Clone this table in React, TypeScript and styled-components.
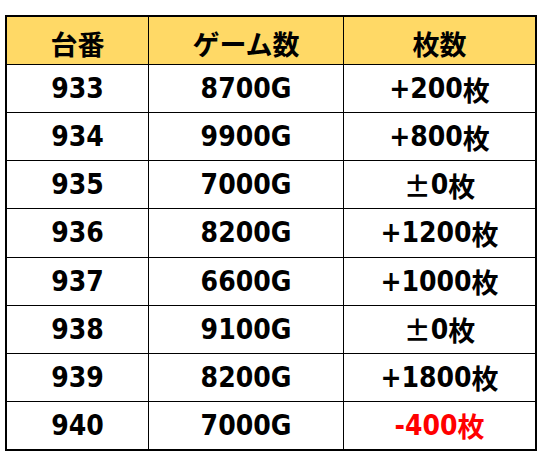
import React from "react";
import styled, { createGlobalStyle } from "styled-components";

const Global = createGlobalStyle`
  html, body { margin: 0; padding: 0; background: #fff; }
  body { font-family: "Noto Sans CJK JP", "Noto Sans", sans-serif; }
`;

const Page = styled.div`
  padding: 15px 0 0 5px;
`;

const Grid = styled.div`
  box-sizing: border-box;
  width: 532px;
  height: 436px;
  background: #000;
  padding: 2px;
  display: grid;
  grid-template-columns: 141px 194px 191px;
  grid-template-rows: 47px repeat(8, 1fr);
  gap: 1px;
`;

const Cell = styled.div<{ $head?: boolean; $red?: boolean }>`
  background: ${(p) => (p.$head ? "#FFD966" : "#fff")};
  color: ${(p) => (p.$red ? "#FF0000" : "#000")};
  display: flex;
  align-items: center;
  justify-content: center;
  font-family: "DejaVu Sans Condensed", "DejaVu Sans", "Noto Sans CJK JP", sans-serif;
  font-stretch: condensed;
  font-weight: 700;
  font-size: 28px;
  line-height: 1;
  padding-top: ${(p) => (p.$head ? "6px" : "1px")};
  box-sizing: border-box;
`;

const Kanji = styled.span`
  font-family: "Noto Sans CJK JP", sans-serif;
  font-stretch: normal;
  font-weight: 700;
  font-size: 27px;
`;

const rows: [string, string, string, string][] = [
  ["933", "8700G", "", "+200"],
  ["934", "9900G", "", "+800"],
  ["935", "7000G", "±", "0"],
  ["936", "8200G", "", "+1200"],
  ["937", "6600G", "", "+1000"],
  ["938", "9100G", "±", "0"],
  ["939", "8200G", "", "+1800"],
  ["940", "7000G", "", "-400"],
];

export default function App() {
  return (
    <Page>
      <Global />
      <Grid>
        <Cell $head><Kanji>台番</Kanji></Cell>
        <Cell $head><Kanji>ゲーム数</Kanji></Cell>
        <Cell $head><Kanji>枚数</Kanji></Cell>
        {rows.map(([a, b, pm, c]) => (
          <React.Fragment key={a}>
            <Cell>{a}</Cell>
            <Cell>{b}</Cell>
            <Cell $red={c.startsWith("-")}>
              {pm && <Kanji>{pm}</Kanji>}
              {c}
              <Kanji>枚</Kanji>
            </Cell>
          </React.Fragment>
        ))}
      </Grid>
    </Page>
  );
}
